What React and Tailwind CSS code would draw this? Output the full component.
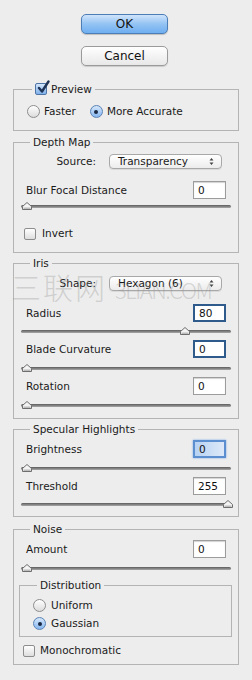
import React from 'react';

const font = { fontFamily: '"DejaVu Sans", "Liberation Sans", sans-serif' };

const Slider = ({ pos = 0 }) => (
  <div className="relative -mx-[5px] h-[10px]">
    <div className="absolute left-0 right-0 top-[4px] h-[3px] rounded-full bg-gradient-to-b from-[#5c5c5c] to-[#a9a9a9]" />
    <svg
      className="absolute top-[1px]"
      style={{ left: `calc(${pos}% * 0.955 + 1px)` }}
      width="10"
      height="8"
      viewBox="0 0 10 8"
    >
      <path d="M5 0.5 L9.5 4.5 L9.5 7.5 L0.5 7.5 L0.5 4.5 Z" fill="#f4f4f4" stroke="#6e6e6e" strokeWidth="1" />
      <path d="M1.5 5.5 H8.5 V7 H1.5 Z" fill="#bdbdbd" />
    </svg>
  </div>
);

const NumInput = ({ value, focus }) => {
  let cls = 'border border-[#9c9c9c] bg-white shadow-[inset_0_1px_1px_rgba(0,0,0,0.18)]';
  if (focus === 'dark') cls = 'border-2 border-[#2f5b8c] bg-white';
  if (focus === 'glow') cls = 'border-2 border-[#5c8fd0] bg-gradient-to-r from-[#b7d2f3] to-[#dde9f8] shadow-[0_0_2px_#7aa8e0]';
  return (
    <div className={`flex h-[18px] w-[33px] items-center pl-[4px] text-[10.5px] text-[#111] ${cls}`}>
      {value}
    </div>
  );
};

const Row = ({ label, value, focus, className = '' }) => (
  <div className={`flex items-center justify-between ${className}`}>
    <span className="text-[10.5px] text-[#1a1a1a]">{label}</span>
    <NumInput value={value} focus={focus} />
  </div>
);

const Select = ({ label, value, className = '' }) => (
  <div className={`flex items-center ${className}`}>
    <span className="w-[70px] text-right text-[10.5px] text-[#1a1a1a]">{label}</span>
    <div className="ml-[13px] flex h-[15px] w-[113px] items-center justify-between rounded-[4px] border border-[#a8a8a8] bg-gradient-to-b from-white to-[#ececec] pl-[8px] pr-[7px] shadow-[0_1px_0_rgba(0,0,0,0.08)]">
      <span className="text-[10.5px] leading-none text-[#1a1a1a]">{value}</span>
      <svg width="5" height="9" viewBox="0 0 5 9">
        <path d="M0.5 3.5 L2.5 1 L4.5 3.5 Z M0.5 5.5 L2.5 8 L4.5 5.5 Z" fill="#444" />
      </svg>
    </div>
  </div>
);

const Checkbox = ({ checked }) =>
  checked ? (
    <span className="relative inline-block h-[12px] w-[12px] rounded-[2px] border border-[#4f74a6] bg-gradient-to-b from-[#d4e6fb] to-[#7fb0ea]">
      <svg className="absolute -top-[4px] left-[1px]" width="13" height="14" viewBox="0 0 13 14">
        <path d="M2 8 L5 11.5 L11.5 1.5" fill="none" stroke="#1d3254" strokeWidth="2.4" strokeLinecap="round" strokeLinejoin="round" />
      </svg>
    </span>
  ) : (
    <span className="inline-block h-[12px] w-[12px] rounded-[2px] border border-[#8d8d8d] bg-gradient-to-b from-white to-[#dedede]" />
  );

const Radio = ({ checked }) =>
  checked ? (
    <span className="flex h-[13px] w-[13px] items-center justify-center rounded-full border border-[#5b83b4] bg-gradient-to-b from-[#d5e7fb] to-[#86b6ee]">
      <span className="h-[4px] w-[4px] rounded-full bg-[#1b2a44]" />
    </span>
  ) : (
    <span className="h-[13px] w-[13px] rounded-full border border-[#8d8d8d] bg-gradient-to-b from-white to-[#dcdcdc]" />
  );

// legend offset is measured from the padding edge, so groups with px-[12px] use ml-[4px]
const Group = ({ legend, className = '', legendClass = 'ml-[4px]', children }) => (
  <fieldset className={`border border-[#b4b4b4] ${className}`}>
    <legend className={`px-[3px] text-[10.5px] leading-[14px] text-[#1a1a1a] ${legendClass}`}>{legend}</legend>
    {children}
  </fieldset>
);

export default function App() {
  return (
    <div className="relative h-[680px] w-[252px] overflow-hidden bg-[#ededed] leading-[13px]" style={font}>
      {/* Buttons */}
      <div className="ml-[81px] mt-[14px] flex h-[20px] w-[87px] items-center justify-center rounded-[5px] border border-[#4d7db7] bg-gradient-to-b from-[#cfe4fb] via-[#94c3f3] to-[#6eaef0] text-[12px] text-[#111] shadow-[0_1px_1px_rgba(0,0,0,0.2)]">
        OK
      </div>
      <div className="ml-[81px] mt-[12px] flex h-[20px] w-[87px] items-center justify-center rounded-[5px] border border-[#9a9a9a] bg-gradient-to-b from-white to-[#e8e8e8] text-[12px] text-[#111] shadow-[0_1px_1px_rgba(0,0,0,0.15)]">
        Cancel
      </div>

      <div className="mx-[13px]">
        {/* Preview */}
        <Group
          className="mt-[16px] pb-[12px] pl-[13px]"
          legendClass="ml-[5px]"
          legend={
            <span className="flex items-center gap-[4px]">
              <Checkbox checked />
              Preview
            </span>
          }
        >
          <div className="mt-[9px] flex items-center text-[10.5px] text-[#1a1a1a]">
            <Radio />
            <span className="ml-[4px]">Faster</span>
            <span className="ml-[14px]"><Radio checked /></span>
            <span className="ml-[4px]">More Accurate</span>
          </div>
        </Group>

        {/* Depth Map */}
        <Group className="mt-[4px] px-[12px] pb-[12px]" legend="Depth Map">
          <Select className="mt-[5px]" label="Source:" value="Transparency" />
          <Row className="mt-[12px]" label="Blur Focal Distance" value="0" />
          <div className="mt-[2px]"><Slider pos={0} /></div>
          <div className="-ml-[2px] mt-[16px] flex items-center gap-[6px] text-[10.5px] text-[#1a1a1a]">
            <Checkbox />
            <span>Invert</span>
          </div>
        </Group>

        {/* Iris */}
        <Group className="mt-[3px] px-[12px] pb-[8px]" legend="Iris">
          <Select className="mt-[6px]" label="Shape:" value="Hexagon (6)" />
          <Row className="mt-[13px]" label="Radius" value="80" focus="dark" />
          <div className="mt-[4px]"><Slider pos={79} /></div>
          <Row className="mt-[4px]" label="Blade Curvature" value="0" focus="dark" />
          <div className="mt-[5px]"><Slider pos={0} /></div>
          <Row className="mt-[4px]" label="Rotation" value="0" />
          <div className="mt-[5px]"><Slider pos={0} /></div>
        </Group>

        {/* Specular Highlights */}
        <Group className="mt-[3px] px-[12px] pb-[7px]" legend="Specular Highlights">
          <Row className="mt-[4px]" label="Brightness" value="0" focus="glow" />
          <div className="mt-[5px]"><Slider pos={0} /></div>
          <Row className="mt-[4px]" label="Threshold" value="255" />
          <div className="mt-[4px]"><Slider pos={100} /></div>
        </Group>

        {/* Noise */}
        <Group className="mt-[5px] px-[12px] pb-[7px]" legend="Noise">
          <Row className="mt-[4px]" label="Amount" value="0" />
          <div className="mt-[5px]"><Slider pos={0} /></div>
          <Group
            className="-ml-[7px] -mr-[6px] mt-[5px] pb-[6px] pl-[13px]"
            legendClass="ml-[4px]"
            legend="Distribution"
          >
            <div className="mt-[7px] flex items-center gap-[5px] text-[10.5px] text-[#1a1a1a]">
              <Radio />
              <span>Uniform</span>
            </div>
            <div className="mt-[5px] flex items-center gap-[5px] text-[10.5px] text-[#1a1a1a]">
              <Radio checked />
              <span>Gaussian</span>
            </div>
          </Group>
          <div className="-ml-[3px] mt-[7px] flex items-center gap-[5px] text-[10.5px] text-[#1a1a1a]">
            <Checkbox />
            <span>Monochromatic</span>
          </div>
        </Group>
      </div>

      {/* Watermark */}
      <div
        className="pointer-events-none absolute left-[11px] top-[271px] flex items-baseline whitespace-nowrap text-[rgba(150,150,150,0.35)]"
        style={{ fontFamily: '"Noto Sans CJK SC", "DejaVu Sans", sans-serif', fontWeight: 300 }}
      >
        <span className="text-[30px] leading-none tracking-[2px]">三联网</span>
        <span className="ml-[8px] text-[22px] leading-none tracking-[-1.5px]">3LIAN.COM</span>
      </div>
    </div>
  );
}
